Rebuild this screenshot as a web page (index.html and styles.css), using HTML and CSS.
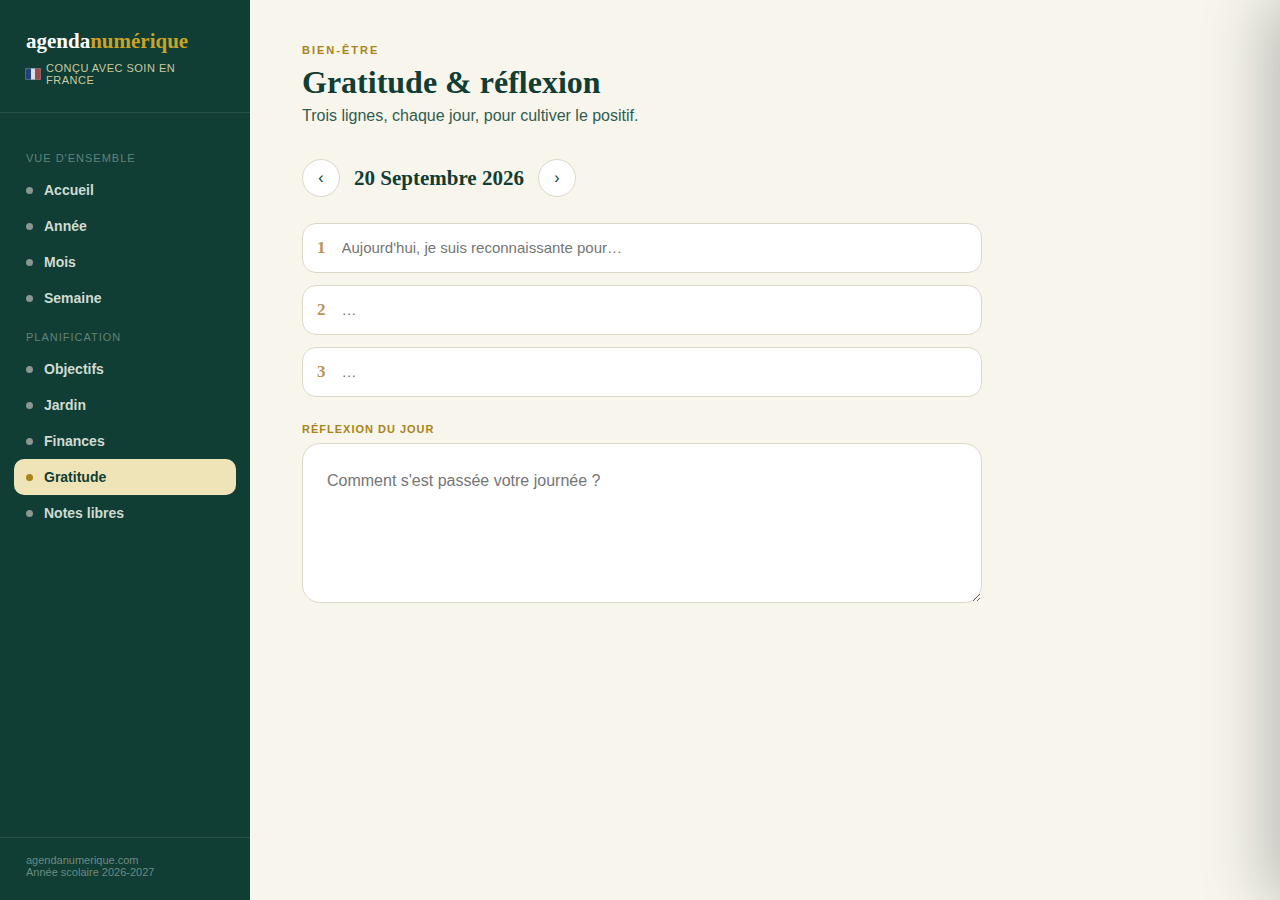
FILE: index.html
```html
<!DOCTYPE html>
<html lang="fr">
<head>
<meta charset="utf-8">
<meta name="viewport" content="width=device-width, initial-scale=1">
<title>Gratitude &amp; réflexion – agendanumérique</title>
<link rel="stylesheet" href="styles.css">
</head>
<body>
<div class="app">
  <aside class="sidebar">
    <header class="brand">
      <div class="brand-name">agenda<span class="brand-accent">numérique</span></div>
      <div class="brand-tag">
        <svg class="flag" viewBox="0 0 16 12" aria-hidden="true">
          <defs><clipPath id="flag-shape"><rect width="16" height="12" rx="2"/></clipPath></defs>
          <g clip-path="url(#flag-shape)">
            <rect width="16" height="12" fill="#dadfe3"/>
            <rect width="6" height="12" fill="#24427c"/>
            <rect x="10" width="6" height="12" fill="#a04a4e"/>
            <rect x="0.5" y="0.5" width="15" height="11" rx="1.5" fill="none" stroke="#6f7f86" stroke-opacity=".6"/>
          </g>
        </svg>
        <span>Conçu avec soin en France</span>
      </div>
    </header>
    <nav class="nav">
      <div class="nav-label">Vue d'ensemble</div>
      <a class="nav-item" href="#accueil">Accueil</a>
      <a class="nav-item" href="#annee">Année</a>
      <a class="nav-item" href="#mois">Mois</a>
      <a class="nav-item" href="#semaine">Semaine</a>
      <div class="nav-label">Planification</div>
      <a class="nav-item" href="#objectifs">Objectifs</a>
      <a class="nav-item" href="#jardin">Jardin</a>
      <a class="nav-item" href="#finances">Finances</a>
      <a class="nav-item active" href="#gratitude" aria-current="page">Gratitude</a>
      <a class="nav-item" href="#notes">Notes libres</a>
    </nav>
    <footer class="side-foot">agendanumerique.com<br>Année scolaire 2026-2027</footer>
  </aside>
  <main class="main">
    <div class="eyebrow">Bien-être</div>
    <h1 class="title">Gratitude &amp; réflexion</h1>
    <p class="subtitle">Trois lignes, chaque jour, pour cultiver le positif.</p>
    <div class="day-nav">
      <button class="round-btn" type="button" aria-label="Jour précédent">‹</button>
      <h2 class="day">20 Septembre 2026</h2>
      <button class="round-btn" type="button" aria-label="Jour suivant">›</button>
    </div>
    <form class="journal">
      <div class="line"><label class="line-num" for="g1">1</label><input class="line-input" id="g1" type="text" placeholder="Aujourd'hui, je suis reconnaissante pour…"></div>
      <div class="line"><label class="line-num" for="g2">2</label><input class="line-input" id="g2" type="text" placeholder="…"></div>
      <div class="line"><label class="line-num" for="g3">3</label><input class="line-input" id="g3" type="text" placeholder="…"></div>
      <label class="field-label" for="reflexion">Réflexion du jour</label>
      <textarea class="reflection" id="reflexion" placeholder="Comment s'est passée votre journée ?"></textarea>
    </form>
  </main>
</div>
<aside class="drawer" aria-hidden="true"></aside>
</body>
</html>
```

FILE: styles.css
```css
* { box-sizing: border-box; }
body {
  margin: 0;
  background: #f8f5ec;
  color: #103d34;
  font-family: "Liberation Sans", Arial, sans-serif;
  font-size: 16px;
  overflow-x: hidden;
}
.app { display: flex; min-height: 100vh; }
.sidebar {
  display: flex;
  flex-direction: column;
  flex: 0 0 250px;
  background: #103d34;
}
.brand { padding: 29px 26px 26px; border-bottom: 1px solid #2a5249; }
.brand-name {
  color: #fff;
  font: bold 21px/24px "Liberation Serif", "Times New Roman", serif;
}
.brand-accent { color: #c9a227; }
.brand-tag {
  display: flex;
  align-items: center;
  gap: 5px;
  margin: 9px 0 0 -1px;
  color: #c9cba3;
  font-size: 11px;
  line-height: 12px;
  letter-spacing: 0.5px;
  text-transform: uppercase;
}
.flag { flex: none; width: 16px; height: 12px; }
.nav { flex: 1; padding: 24px 14px; }
.nav-label {
  padding: 15px 12px 8px;
  color: #628379;
  font-size: 11px;
  line-height: 12px;
  letter-spacing: 1px;
  text-transform: uppercase;
}
.nav-item {
  display: flex;
  align-items: center;
  gap: 11px;
  padding: 10px 12px;
  border-radius: 10px;
  color: #cfdbd3;
  font-size: 14px;
  font-weight: bold;
  line-height: 16px;
  text-decoration: none;
}
.nav-item::before {
  content: "";
  width: 7px;
  height: 7px;
  border-radius: 50%;
  background: #8a968f;
}
.nav-item.active { background: #efe4b8; color: #103d34; }
.nav-item.active::before { background: #a8831a; }
.side-foot {
  padding: 16px 26px 22px;
  border-top: 1px solid #2a5249;
  color: #6d8b82;
  font-size: 11px;
  line-height: 12px;
}
.main { flex: 1; min-width: 0; padding: 44px 52px; }
.eyebrow, .field-label {
  color: #a8831a;
  font-size: 11px;
  font-weight: bold;
  line-height: 12px;
  text-transform: uppercase;
}
.eyebrow { letter-spacing: 2px; }
.title {
  margin: 8px 0 0;
  font: bold 32px/36px "Liberation Serif", "Times New Roman", serif;
}
.subtitle { margin: 6px 0 0; color: #2f5d50; line-height: 20px; }
.day-nav { display: flex; align-items: center; gap: 14px; margin: 33px 0 26px; }
.round-btn {
  width: 38px;
  height: 38px;
  padding: 0;
  border: 1px solid #dcd8c8;
  border-radius: 50%;
  background: #fff;
  color: #103d34;
  font: 16px "Liberation Sans", Arial, sans-serif;
}
.day { margin: 0; font: bold 21px/24px "Liberation Serif", "Times New Roman", serif; }
.journal { display: flex; flex-direction: column; gap: 12px; max-width: 680px; }
.line {
  display: flex;
  align-items: center;
  gap: 14px;
  padding: 14px;
  border: 1px solid #dcd8c8;
  border-radius: 14px;
  background: #fff;
}
.line-num {
  color: #b8935a;
  font: bold 17px/20px "Liberation Serif", "Times New Roman", serif;
}
.line-input {
  flex: 1;
  min-width: 0;
  height: 20px;
  padding: 0 2px 2px;
  border: 0;
  outline: 0;
  background: transparent;
  color: inherit;
  font: 15px "Liberation Sans", Arial, sans-serif;
}
.field-label { margin: 14px 0 -4px; letter-spacing: 1px; }
.reflection {
  width: 100%;
  height: 160px;
  padding: 24px;
  border: 1px solid #dcd8c8;
  border-radius: 18px;
  background: #fff;
  color: inherit;
  font: 16px/26px "Liberation Sans", Arial, sans-serif;
  resize: vertical;
}
/* Closed side panel, waiting past the right edge */
.drawer {
  position: fixed;
  top: 0;
  bottom: 0;
  left: 100%;
  width: 420px;
  background: #fff;
  box-shadow: -12px 0 60px rgba(16, 36, 36, 0.28);
}
```
